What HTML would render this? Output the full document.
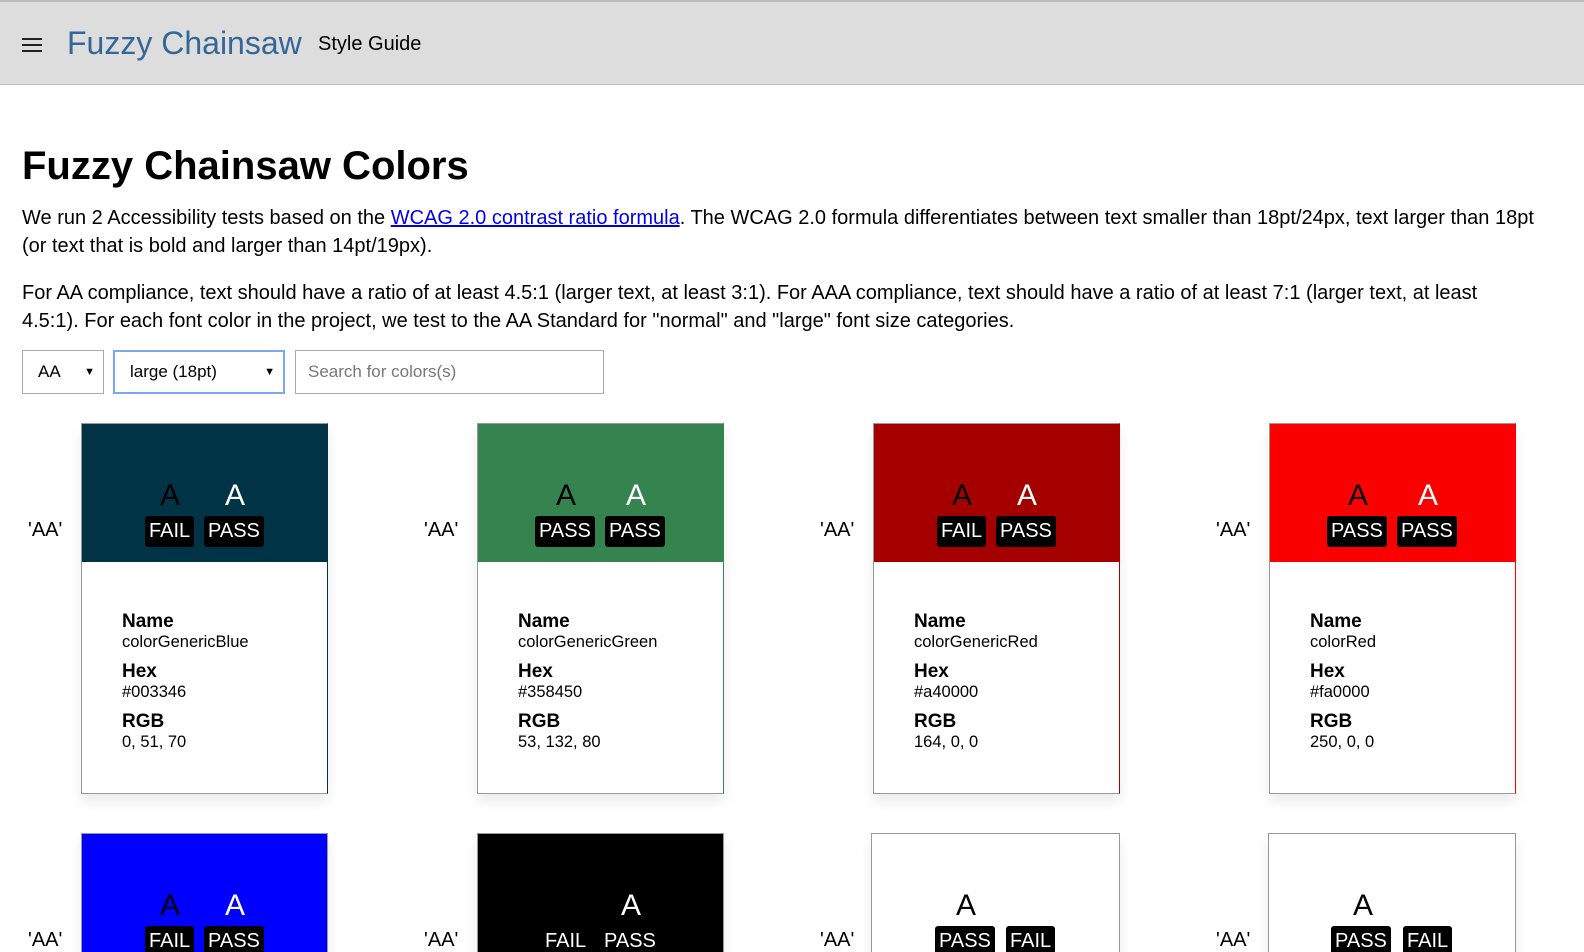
<!DOCTYPE html>
<html><head><meta charset="utf-8"><style>
*{box-sizing:border-box;margin:0;padding:0}
html,body{width:1584px;height:952px;overflow:hidden}
body{background:#fff;font-family:"Liberation Sans",Arial,sans-serif;color:#000;position:relative}
.hdr{position:absolute;left:0;top:0;width:1584px;height:85px;background:#ddd;border-top:2px solid #bdbdbd;border-bottom:1px solid #bdbdbd}
.burger{position:absolute;left:22px;top:36px;width:20px}
.burger i{display:block;height:2px;background:#222;margin-bottom:4px}
.brand{position:absolute;left:67px;top:23px;font-size:32px;color:#336699}
.sg{position:absolute;left:318px;top:31px;font-size:20px}
h1{position:absolute;left:22px;top:144px;font-size:40px;font-weight:bold}
p{position:absolute;left:22px;width:1515px;font-size:20px;line-height:28px}
a{color:#0000ee}
.sel{position:absolute;top:350px;height:44px;border:1px solid #aaa;font-size:17px;line-height:42px;padding-left:15px}
.sel b{position:absolute;right:8px;top:0;font-size:11px;font-weight:normal}
.lab{position:absolute;font-size:20px}
.card{position:absolute;width:247px;height:371px;border:1px solid #999;box-shadow:0 8px 12px rgba(0,0,0,.08);background:#fff}
.sw{height:138px;position:relative}
.A{position:absolute;top:55px;font-size:30px;width:40px;text-align:center}
.bd{position:absolute;top:92px;height:31px;background:#000;color:#fff;font-size:20px;line-height:31px;padding:0 4px;border-radius:3px}
.info{padding:49px 0 0 40px}
.info b{display:block;font-size:19px;line-height:22px}
.info span{display:block;font-size:16.5px;line-height:19px;margin-bottom:9px}
</style></head><body>
<div class="hdr"><div class="burger"><i></i><i></i><i></i></div><div class="brand">Fuzzy Chainsaw</div><div class="sg">Style Guide</div></div>
<h1>Fuzzy Chainsaw Colors</h1>
<p style="top:204px">We run 2 Accessibility tests based on the <a href="#">WCAG 2.0 contrast ratio formula</a>. The WCAG 2.0 formula differentiates between text smaller than 18pt/24px, text larger than 18pt<br>(or text that is bold and larger than 14pt/19px).</p>
<p style="top:279px">For AA compliance, text should have a ratio of at least 4.5:1 (larger text, at least 3:1). For AAA compliance, text should have a ratio of at least 7:1 (larger text, at least<br>4.5:1). For each font color in the project, we test to the AA Standard for "normal" and "large" font size categories.</p>
<div class="sel" style="left:22px;width:82px">AA<b>▼</b></div>
<div class="sel" style="left:113px;width:172px;border:2px solid #7aa7ee;line-height:40px">large (18pt)<b>▼</b></div>
<div class="sel" style="left:295px;width:309px;color:#777;padding-left:12px">Search for colors(s)</div>

<div class="lab" style="left:28px;top:519px">'AA'</div>
<div class="card" style="left:81px;top:423px;border-right-color:#003346"><div class="sw" style="background:#003346"><div class="A" style="left:68px">A</div><div class="A" style="left:133px;color:#fff">A</div><div class="bd" style="left:63px">FAIL</div><div class="bd" style="left:122px">PASS</div></div><div class="info"><b>Name</b><span>colorGenericBlue</span><b>Hex</b><span>#003346</span><b>RGB</b><span>0, 51, 70</span></div></div>

<div class="lab" style="left:424px;top:519px">'AA'</div>
<div class="card" style="left:477px;top:423px;border-right-color:#358450"><div class="sw" style="background:#358450"><div class="A" style="left:68px">A</div><div class="A" style="left:138px;color:#fff">A</div><div class="bd" style="left:57px">PASS</div><div class="bd" style="left:127px">PASS</div></div><div class="info"><b>Name</b><span>colorGenericGreen</span><b>Hex</b><span>#358450</span><b>RGB</b><span>53, 132, 80</span></div></div>

<div class="lab" style="left:820px;top:519px">'AA'</div>
<div class="card" style="left:873px;top:423px;border-right-color:#a40000"><div class="sw" style="background:#a40000"><div class="A" style="left:68px">A</div><div class="A" style="left:133px;color:#fff">A</div><div class="bd" style="left:63px">FAIL</div><div class="bd" style="left:122px">PASS</div></div><div class="info"><b>Name</b><span>colorGenericRed</span><b>Hex</b><span>#a40000</span><b>RGB</b><span>164, 0, 0</span></div></div>

<div class="lab" style="left:1216px;top:519px">'AA'</div>
<div class="card" style="left:1269px;top:423px;border-right-color:#fa0000"><div class="sw" style="background:#fa0000"><div class="A" style="left:68px">A</div><div class="A" style="left:138px;color:#fff">A</div><div class="bd" style="left:57px">PASS</div><div class="bd" style="left:127px">PASS</div></div><div class="info"><b>Name</b><span>colorRed</span><b>Hex</b><span>#fa0000</span><b>RGB</b><span>250, 0, 0</span></div></div>

<div class="lab" style="left:28px;top:929px">'AA'</div>
<div class="card" style="left:81px;top:833px"><div class="sw" style="background:#0000ff"><div class="A" style="left:68px">A</div><div class="A" style="left:133px;color:#fff">A</div><div class="bd" style="left:63px">FAIL</div><div class="bd" style="left:122px">PASS</div></div></div>

<div class="lab" style="left:424px;top:929px">'AA'</div>
<div class="card" style="left:477px;top:833px"><div class="sw" style="background:#000"><div class="A" style="left:64px;color:#000">A</div><div class="A" style="left:133px;color:#fff">A</div><div class="bd" style="left:63px">FAIL</div><div class="bd" style="left:122px">PASS</div></div></div>

<div class="lab" style="left:820px;top:929px">'AA'</div>
<div class="card" style="left:871px;top:833px;width:249px"><div class="sw" style="background:#fff"><div class="A" style="left:74px">A</div><div class="bd" style="left:63px">PASS</div><div class="bd" style="left:134px">FAIL</div></div></div>

<div class="lab" style="left:1216px;top:929px">'AA'</div>
<div class="card" style="left:1268px;top:833px;width:248px"><div class="sw" style="background:#fff"><div class="A" style="left:74px">A</div><div class="bd" style="left:62px">PASS</div><div class="bd" style="left:134px">FAIL</div></div></div>
</body></html>
